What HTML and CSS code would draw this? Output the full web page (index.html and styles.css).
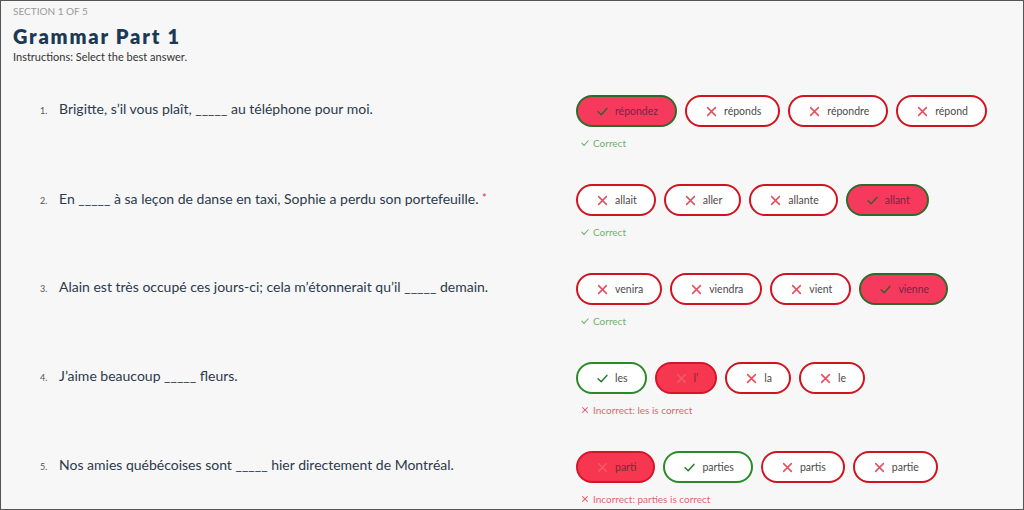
FILE: index.html
```html
<!DOCTYPE html>
<html>
<head>
<meta charset="utf-8">
<link rel="stylesheet" href="styles.css">
</head>
<body>
<div class="frame">
  <header class="head">
    <div class="section">Section 1 of 5</div>
    <h1 class="title">Grammar Part 1</h1>
    <div class="instr">Instructions: Select the best answer.</div>
  </header>
  <ol class="questions">
    <li class="q">
      <div class="qtext"><span class="num">1.</span><span>Brigitte, s’il vous plaît, _____ au téléphone pour moi.</span></div>
      <div class="answers">
        <div class="opts">
          <span class="opt sel-right"><svg class="ic" viewBox="0 0 10 10"><path d="M1 5.2 L3.8 8 L9 2.2"/></svg>répondez</span>
          <span class="opt wrong"><svg class="ic" viewBox="0 0 10 10"><path d="M1.5 1.5 L8.5 8.5 M8.5 1.5 L1.5 8.5"/></svg>réponds</span>
          <span class="opt wrong"><svg class="ic" viewBox="0 0 10 10"><path d="M1.5 1.5 L8.5 8.5 M8.5 1.5 L1.5 8.5"/></svg>répondre</span>
          <span class="opt wrong"><svg class="ic" viewBox="0 0 10 10"><path d="M1.5 1.5 L8.5 8.5 M8.5 1.5 L1.5 8.5"/></svg>répond</span>
        </div>
        <div class="fb ok"><svg class="fic" viewBox="0 0 10 10"><path d="M1 5.2 L3.8 8 L9 2.2"/></svg>Correct</div>
      </div>
    </li>
    <li class="q">
      <div class="qtext"><span class="num">2.</span><span>En _____ à sa leçon de danse en taxi, Sophie a perdu son portefeuille. <span class="req">*</span></span></div>
      <div class="answers">
        <div class="opts">
          <span class="opt wrong"><svg class="ic" viewBox="0 0 10 10"><path d="M1.5 1.5 L8.5 8.5 M8.5 1.5 L1.5 8.5"/></svg>allait</span>
          <span class="opt wrong"><svg class="ic" viewBox="0 0 10 10"><path d="M1.5 1.5 L8.5 8.5 M8.5 1.5 L1.5 8.5"/></svg>aller</span>
          <span class="opt wrong"><svg class="ic" viewBox="0 0 10 10"><path d="M1.5 1.5 L8.5 8.5 M8.5 1.5 L1.5 8.5"/></svg>allante</span>
          <span class="opt sel-right"><svg class="ic" viewBox="0 0 10 10"><path d="M1 5.2 L3.8 8 L9 2.2"/></svg>allant</span>
        </div>
        <div class="fb ok"><svg class="fic" viewBox="0 0 10 10"><path d="M1 5.2 L3.8 8 L9 2.2"/></svg>Correct</div>
      </div>
    </li>
    <li class="q">
      <div class="qtext"><span class="num">3.</span><span>Alain est très occupé ces jours-ci; cela m’étonnerait qu’il _____ demain.</span></div>
      <div class="answers">
        <div class="opts">
          <span class="opt wrong"><svg class="ic" viewBox="0 0 10 10"><path d="M1.5 1.5 L8.5 8.5 M8.5 1.5 L1.5 8.5"/></svg>venira</span>
          <span class="opt wrong"><svg class="ic" viewBox="0 0 10 10"><path d="M1.5 1.5 L8.5 8.5 M8.5 1.5 L1.5 8.5"/></svg>viendra</span>
          <span class="opt wrong"><svg class="ic" viewBox="0 0 10 10"><path d="M1.5 1.5 L8.5 8.5 M8.5 1.5 L1.5 8.5"/></svg>vient</span>
          <span class="opt sel-right"><svg class="ic" viewBox="0 0 10 10"><path d="M1 5.2 L3.8 8 L9 2.2"/></svg>vienne</span>
        </div>
        <div class="fb ok"><svg class="fic" viewBox="0 0 10 10"><path d="M1 5.2 L3.8 8 L9 2.2"/></svg>Correct</div>
      </div>
    </li>
    <li class="q">
      <div class="qtext"><span class="num">4.</span><span>J’aime beaucoup _____ fleurs.</span></div>
      <div class="answers">
        <div class="opts">
          <span class="opt right"><svg class="ic" viewBox="0 0 10 10"><path d="M1 5.2 L3.8 8 L9 2.2"/></svg>les</span>
          <span class="opt sel-wrong"><svg class="ic" viewBox="0 0 10 10"><path d="M1.5 1.5 L8.5 8.5 M8.5 1.5 L1.5 8.5"/></svg>l’</span>
          <span class="opt wrong"><svg class="ic" viewBox="0 0 10 10"><path d="M1.5 1.5 L8.5 8.5 M8.5 1.5 L1.5 8.5"/></svg>la</span>
          <span class="opt wrong"><svg class="ic" viewBox="0 0 10 10"><path d="M1.5 1.5 L8.5 8.5 M8.5 1.5 L1.5 8.5"/></svg>le</span>
        </div>
        <div class="fb bad"><svg class="fic" viewBox="0 0 10 10"><path d="M2 2 L8 8 M8 2 L2 8"/></svg>Incorrect: les is correct</div>
      </div>
    </li>
    <li class="q">
      <div class="qtext"><span class="num">5.</span><span>Nos amies québécoises sont _____ hier directement de Montréal.</span></div>
      <div class="answers">
        <div class="opts">
          <span class="opt sel-wrong"><svg class="ic" viewBox="0 0 10 10"><path d="M1.5 1.5 L8.5 8.5 M8.5 1.5 L1.5 8.5"/></svg>parti</span>
          <span class="opt right"><svg class="ic" viewBox="0 0 10 10"><path d="M1 5.2 L3.8 8 L9 2.2"/></svg>parties</span>
          <span class="opt wrong"><svg class="ic" viewBox="0 0 10 10"><path d="M1.5 1.5 L8.5 8.5 M8.5 1.5 L1.5 8.5"/></svg>partis</span>
          <span class="opt wrong"><svg class="ic" viewBox="0 0 10 10"><path d="M1.5 1.5 L8.5 8.5 M8.5 1.5 L1.5 8.5"/></svg>partie</span>
        </div>
        <div class="fb bad"><svg class="fic" viewBox="0 0 10 10"><path d="M2 2 L8 8 M8 2 L2 8"/></svg>Incorrect: parties is correct</div>
      </div>
    </li>
  </ol>
</div>
</body>
</html>
```
FILE: styles.css
```css
html, body {
  margin: 0;
  padding: 0;
  background: #f7f7f7;
}
body {
  font-family: "Lato", "Liberation Sans", sans-serif;
  color: #333;
}
.frame {
  box-sizing: border-box;
  width: 1024px;
  height: 510px;
  border: 1px solid #555;
  overflow: hidden;
  background: #f7f7f7;
}
.head {
  padding: 4px 0 0 12px;
}
.section {
  font-size: 10px;
  text-transform: uppercase;
  color: #9a9a9a;
  line-height: 12px;
}
.title {
  margin: 7px 0 0 0;
  font-size: 20px;
  line-height: 24px;
  font-weight: 800;
  letter-spacing: 1.8px;
  color: #1c3a56;
}
.instr {
  margin-top: 2px;
  font-size: 11px;
  line-height: 14px;
  color: #333;
}
.questions {
  list-style: none;
  margin: 0;
  padding: 31px 0 0 0;
}
.q {
  display: flex;
  height: 89px;
}
.qtext {
  width: 536px;
  padding: 4px 0 0 39px;
  display: flex;
  align-items: baseline;
  font-size: 14px;
  line-height: 20px;
  color: #2b3a4c;
}
.num {
  width: 19px;
  flex: none;
  font-size: 9px;
  color: #555;
}
.req {
  color: #e0303a;
  font-size: 11px;
  vertical-align: 2px;
}
.answers {
  display: flex;
  flex-direction: column;
}
.opts {
  display: flex;
  gap: 8px;
}
.opt {
  box-sizing: border-box;
  height: 32px;
  border: 2px solid #d1131f;
  border-radius: 16px;
  background: #fff;
  display: inline-flex;
  align-items: center;
  gap: 7px;
  padding: 0 17px 0 19px;
  font-size: 10.5px;
  color: #4a4a4a;
}
.ic {
  width: 11px;
  height: 11px;
  fill: none;
  stroke-width: 1.4;
  stroke-linecap: round;
  stroke-linejoin: round;
}
.wrong .ic { stroke: #e1505f; }
.right { border-color: #2a8a2a; }
.right .ic { stroke: #2a7d2f; }
.sel-right {
  background: #f53a5e;
  border-color: #2f6a2b;
  color: #7a2445;
}
.sel-right .ic { stroke: #3d5d34; }
.sel-wrong {
  background: #f6374f;
  border-color: #d4162a;
  color: #7a2a3a;
}
.sel-wrong .ic { stroke: #f2585f; }
.fb {
  margin-top: 9px;
  margin-left: 5px;
  font-size: 10px;
  line-height: 14px;
  display: flex;
  align-items: center;
  gap: 4px;
}
.fic {
  width: 8px;
  height: 8px;
  fill: none;
  stroke-width: 1.3;
  stroke-linecap: round;
}
.ok { color: #6cb36c; }
.ok .fic { stroke: #6cb36c; }
.bad { color: #e36470; }
.bad .fic { stroke: #e36470; }
```
